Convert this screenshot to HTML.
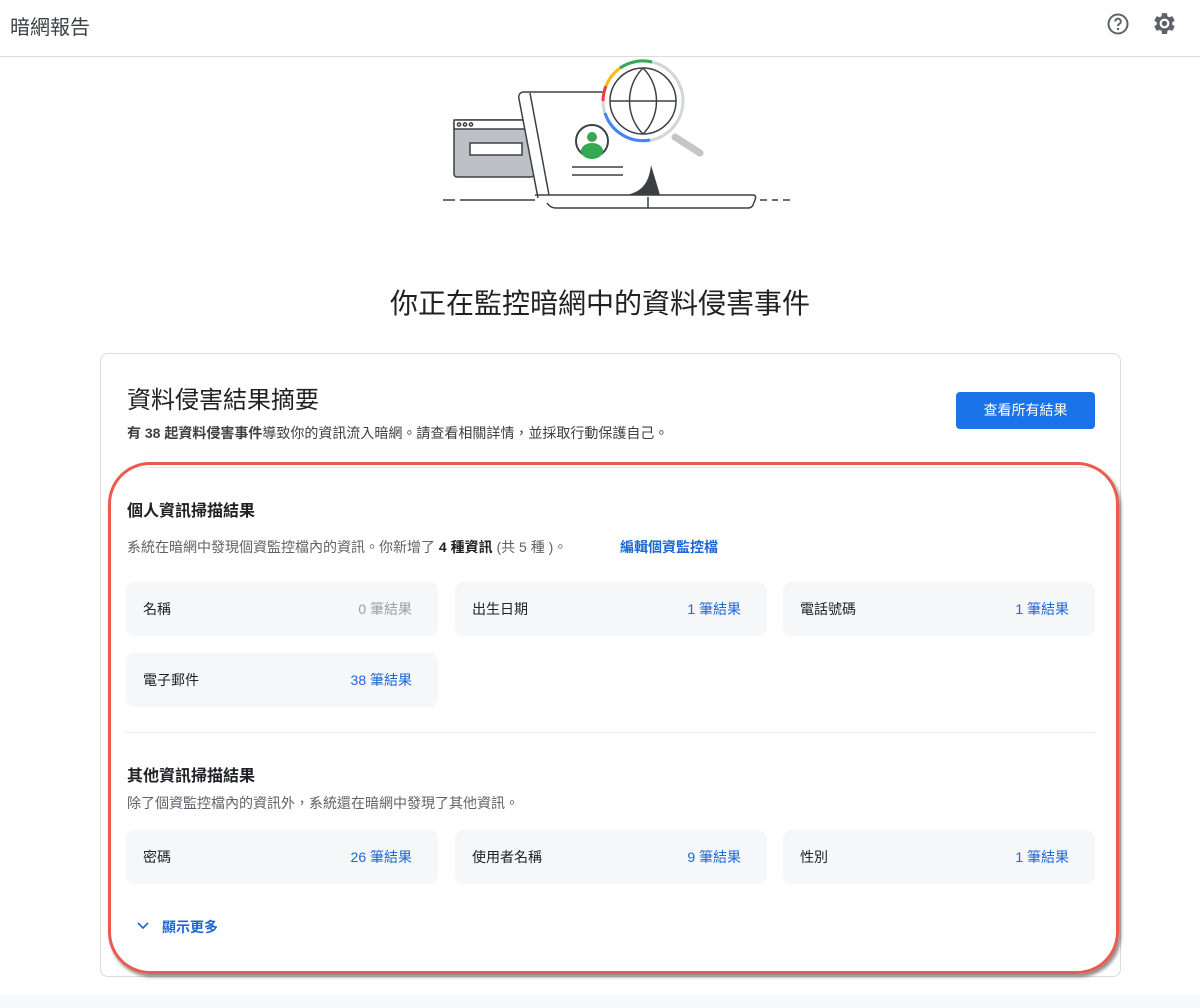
<!DOCTYPE html>
<html><head><meta charset="utf-8"><style>
*{margin:0;padding:0;box-sizing:border-box}
body{width:1200px;height:1008px;background:#fff;font-family:"Liberation Sans","Noto Sans CJK TC",sans-serif;color:#202124;position:relative;overflow:hidden}
.a{position:absolute;white-space:nowrap}
.tile{position:absolute;width:312px;height:54px;background:#f6f7f9;border-radius:8px;font-size:14px}
.tile .l{position:absolute;left:17px;top:17px;color:#202124}
.tile .r{position:absolute;right:26px;top:17px;color:#1967d2}
.tile .r.g{color:#9aa0a6}
</style></head><body>
<div class="a" style="left:10px;top:11px;font-size:20px;color:#3c4043">暗網報告</div>
<svg class="a" style="left:1106px;top:12px" width="24" height="24" viewBox="0 0 24 24"><circle cx="12" cy="12" r="9.5" fill="none" stroke="#5f6368" stroke-width="2"/><path d="M9.2 9.5a2.8 2.8 0 1 1 4 2.5c-.9.5-1.2 1-1.2 2" fill="none" stroke="#5f6368" stroke-width="2"/><circle cx="12" cy="17" r="1.2" fill="#5f6368"/></svg>
<svg class="a" style="left:1152px;top:11px" width="25" height="25" viewBox="0 0 24 24"><path fill="#5f6368" d="M19.4 13c.04-.33.06-.66.06-1s-.02-.67-.06-1l2.1-1.65c.2-.15.25-.42.12-.64l-2-3.46c-.12-.22-.39-.3-.61-.22l-2.49 1c-.52-.4-1.080-.73-1.69-.98l-.38-2.65A.49.49 0 0 0 14 2h-4c-.25 0-.46.18-.49.42l-.38 2.65c-.61.25-1.17.59-1.69.98l-2.49-1a.5.5 0 0 0-.61.22l-2 3.46c-.13.22-.07.49.12.64L4.570 11c-.04.33-.07.67-.07 1s.03.67.07 1l-2.11 1.65c-.19.15-.24.42-.12.64l2 3.46c.12.22.39.3.61.22l2.49-1c.52.4 1.08.73 1.69.98l.38 2.650c.03.24.24.42.49.42h4c.25 0 .46-.18.49-.42l.38-2.65c.61-.25 1.17-.59 1.69-.98l2.49 1c.23.09.49 0 .61-.22l2-3.46c.12-.22.07-.49-.12-.64L19.4 13z"/><path fill="#fff" d="M12 7.3a4.7 4.7 0 1 0 0 9.4 4.7 4.7 0 0 0 0-9.4z"/><circle cx="12" cy="12" r="2.6" fill="#5f6368"/></svg>
<div class="a" style="left:0;top:56px;width:1200px;height:1px;background:#dadce0"></div>

<svg class="a" style="left:430px;top:55px" width="370" height="160" viewBox="0 0 370 160">
<g fill="none" stroke="#3c4043" stroke-width="1.5">
<rect x="24" y="65" width="80" height="57" rx="3" fill="#bdc1c6"/>
<rect x="24" y="65" width="80" height="9" fill="#fff"/>
<circle cx="29" cy="69.5" r="1.6"/><circle cx="35" cy="69.5" r="1.6"/><circle cx="41" cy="69.5" r="1.6"/>
<rect x="40" y="88" width="52" height="12" fill="#fff"/>
<path d="M108 143L89 44c-1-4 1-7 5-7h90" fill="#fff"/>
<path d="M100 38l19 102"/>
<path d="M105 140h218c3 0 3 2 2 5l-2 5c-1 2-3 3-5 3H126c-4 0-7-2-9-5"/>
<path d="M218 153V142"/>
<path d="M13 145h12M30 145h75M330 145h7M342 145h6M353 145h7"/>
<circle cx="162" cy="86" r="16" fill="#fff" stroke-width="2"/>
<path d="M142 112h51M142 120h51"/>
</g>
<path d="M221 110l9 30h-34c16-3 23-12 25-30z" fill="#3c4043"/>
<circle cx="162" cy="82" r="5" fill="#34a853"/><path d="M151 96a11 8 0 0 1 22 0a11 8 0 0 1-22 0z" fill="#34a853"/>
<path d="M245 82l25 16" stroke="#c4c7c5" stroke-width="7" stroke-linecap="round"/>
<circle cx="213" cy="46" r="40" fill="#fff" stroke="#d3d5d7" stroke-width="3"/>
<path d="M175 58a40 40 0 0 0 45 27" fill="none" stroke="#4285f4" stroke-width="3"/>
<path d="M173 46a40 40 0 0 1 3-15" fill="none" stroke="#ea4335" stroke-width="3"/>
<path d="M176 31a40 40 0 0 1 14-18" fill="none" stroke="#fbbc04" stroke-width="3"/>
<path d="M190 13a40 40 0 0 1 32-6" fill="none" stroke="#34a853" stroke-width="3"/>
<g fill="none" stroke="#3c4043" stroke-width="1.5"><circle cx="213" cy="46" r="33"/><path d="M180 46h66M213 13c-18 18-18 48 0 66M213 13c18 18 18 48 0 66"/></g>
</svg>

<div class="a" style="left:0;width:1200px;text-align:center;top:282px;font-size:28px;color:#202124">你正在監控暗網中的資料侵害事件</div>

<div class="a" style="left:100px;top:353px;width:1021px;height:624px;border:1px solid #dadce0;border-radius:8px"></div>
<div class="a" style="left:127px;top:380px;font-size:24px">資料侵害結果摘要</div>
<div class="a" style="left:127px;top:423px;font-size:14px;color:#3c4043"><b>有 38 起資料侵害事件</b>導致你的資訊流入暗網。請查看相關詳情，並採取行動保護自己。</div>
<div class="a" style="left:956px;top:392px;width:139px;height:37px;background:#1a73e8;border-radius:4px;color:#fff;font-size:14px;text-align:center;line-height:37px">查看所有結果</div>
<div class="a" style="left:126px;top:467px;width:969px;height:1px;background:#e8eaed"></div>

<div class="a" style="left:127px;top:497px;font-size:16px;font-weight:bold">個人資訊掃描結果</div>
<div class="a" style="left:127px;top:537px;font-size:14px;color:#5f6368">系統在暗網中發現個資監控檔內的資訊。你新增了 <b style="color:#202124">4 種資訊</b> (共 5 種 )。</div>
<div class="a" style="left:620px;top:537px;font-size:14px;color:#1967d2;font-weight:bold">編輯個資監控檔</div>

<div class="tile" style="left:126px;top:582px"><span class="l">名稱</span><span class="r g">0 筆結果</span></div>
<div class="tile" style="left:455px;top:582px"><span class="l">出生日期</span><span class="r">1 筆結果</span></div>
<div class="tile" style="left:783px;top:582px"><span class="l">電話號碼</span><span class="r">1 筆結果</span></div>
<div class="tile" style="left:126px;top:653px"><span class="l">電子郵件</span><span class="r">38 筆結果</span></div>

<div class="a" style="left:126px;top:732px;width:969px;height:1px;background:#e8eaed"></div>
<div class="a" style="left:127px;top:762px;font-size:16px;font-weight:bold">其他資訊掃描結果</div>
<div class="a" style="left:127px;top:793px;font-size:14px;color:#5f6368">除了個資監控檔內的資訊外，系統還在暗網中發現了其他資訊。</div>
<div class="tile" style="left:126px;top:830px"><span class="l">密碼</span><span class="r">26 筆結果</span></div>
<div class="tile" style="left:455px;top:830px"><span class="l">使用者名稱</span><span class="r">9 筆結果</span></div>
<div class="tile" style="left:783px;top:830px"><span class="l">性別</span><span class="r">1 筆結果</span></div>

<svg class="a" style="left:136px;top:921px" width="14" height="10" viewBox="0 0 14 10"><path d="M2 2l5 5 5-5" fill="none" stroke="#1967d2" stroke-width="1.6"/></svg>
<div class="a" style="left:162px;top:917px;font-size:14px;color:#1967d2;font-weight:bold">顯示更多</div>

<div class="a" style="left:108px;top:462px;width:1011px;height:512px;border:3px solid #ea5a4f;border-radius:42px;box-shadow:2px 3px 3px rgba(0,0,0,0.45)"></div>
<div class="a" style="left:0;top:995px;width:1200px;height:13px;background:#f8f9fa"></div>
</body></html>
